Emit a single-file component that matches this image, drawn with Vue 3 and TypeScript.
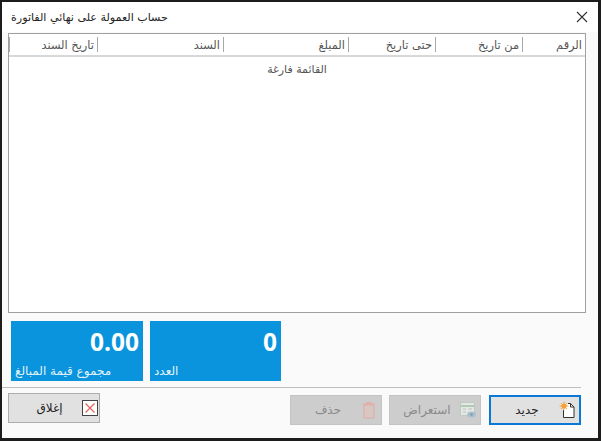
<script setup lang="ts">
interface Column {
  label: string
  width: number
}

const columns: Column[] = [
  { label: 'الرقم', width: 63 },
  { label: 'من تاريخ', width: 87 },
  { label: 'حتى تاريخ', width: 87 },
  { label: 'المبلغ', width: 125 },
  { label: 'السند', width: 126 },
  { label: 'تاريخ السند', width: 88 },
]

const tiles = [
  { value: '0', label: 'العدد' },
  { value: '0.00', label: 'مجموع قيمة المبالغ' },
]
</script>

<template>
  <div class="window" dir="rtl">
    <header class="titlebar">
      <svg class="close" width="12" height="12" viewBox="0 0 12 12">
        <path d="M1 1 L11 11 M11 1 L1 11" stroke="#333" stroke-width="1.1" fill="none" />
      </svg>
      <span class="title">حساب العمولة على نهائي الفاتورة</span>
    </header>

    <section class="grid">
      <div class="grid-head">
        <div v-for="col in columns" :key="col.label" class="grid-col" :style="{ width: col.width + 'px' }">
          {{ col.label }}
        </div>
      </div>
      <div class="grid-empty">القائمة فارغة</div>
    </section>

    <section class="tiles">
      <div v-for="tile in tiles" :key="tile.label" class="tile">
        <div class="tile-value">{{ tile.value }}</div>
        <div class="tile-label">{{ tile.label }}</div>
      </div>
    </section>

    <div class="rule"></div>

    <footer class="actions">
      <button class="btn btn-primary">
        <svg width="18" height="18" viewBox="0 0 18 18">
          <path d="M5.5 9 V16.5 H16 V6 L12.5 2.5 H10" fill="#fff" stroke="#333" stroke-width="1" />
          <path d="M12.5 2.5 V6 H16" fill="none" stroke="#333" stroke-width="1" />
          <circle cx="6" cy="5" r="2.6" fill="#f6a03a" />
          <path d="M6 0.5 V9.5 M1.5 5 H10.5 M3 2 L9 8 M9 2 L3 8" stroke="#f6a03a" stroke-width="0.9" />
        </svg>
        <span>جديد</span>
      </button>
      <button class="btn btn-off btn-view">
        <svg width="18" height="18" viewBox="0 0 18 18">
          <rect x="1.5" y="1.5" width="14" height="13" fill="#e4e8e4" stroke="#bccbbc" />
          <path d="M1.5 5 H15.5" stroke="#b2c9b2" stroke-width="2" />
          <path d="M4 8 H7 M9 8 H13 M4 11 H7" stroke="#c0c0c0" />
          <ellipse cx="12.5" cy="13.5" rx="4.5" ry="3" fill="#a9c0cf" />
          <circle cx="12.5" cy="13.5" r="1.3" fill="#8398a8" />
        </svg>
        <span>استعراض</span>
      </button>
      <button class="btn btn-off">
        <svg width="18" height="18" viewBox="0 0 18 18">
          <path d="M4 4 H14 V17 H4 Z" fill="#d4c9c6" stroke="#e3a9a0" />
          <path d="M3 3 H15 M7 3 V1.5 H11 V3" fill="none" stroke="#e3a9a0" />
          <path d="M7 6.5 V14.5 M11 6.5 V14.5" stroke="#e3c0b8" />
        </svg>
        <span>حذف</span>
      </button>
      <div class="spacer"></div>
      <button class="btn btn-close">
        <svg width="16" height="16" viewBox="0 0 16 16">
          <rect x="0.5" y="0.5" width="15" height="15" fill="#fff" stroke="#444" />
          <path d="M3.5 3.5 L12.5 12.5 M12.5 3.5 L3.5 12.5" stroke="#e8605a" stroke-width="1.2" />
        </svg>
        <span>إغلاق</span>
      </button>
    </footer>
  </div>
</template>

<style>
html,
body {
  margin: 0;
  background: #000;
}
</style>

<style scoped>
.window {
  box-sizing: border-box;
  width: 601px;
  height: 441px;
  background: #fafafa;
  border: solid #1c1c1c;
  border-width: 2px 3px 3px 2px;
  font-family: "DejaVu Sans", sans-serif;
  font-size: 11px;
  color: #333;
  display: flex;
  flex-direction: column;
}

.titlebar {
  height: 30px;
  flex: none;
  background: #fff;
  display: flex;
  align-items: center;
  justify-content: space-between;
  padding: 0 10px 0 9px;
  margin-bottom: 1px;
}

.close {
  margin-top: -1px;
}

.title {
  font-size: 11.1px;
  color: #222;
  white-space: nowrap;
}

.grid {
  box-sizing: border-box;
  width: 578px;
  height: 280px;
  margin-right: 12px;
  flex: none;
  background: #fff;
  border: 1px solid #a0a0a0;
}

.grid-head {
  height: 21px;
  display: flex;
  border-bottom: 2px solid #d8d8d8;
}

.grid-col {
  box-sizing: border-box;
  height: 15px;
  margin-top: 3px;
  padding-right: 3px;
  border-left: 1px solid #a8a8a8;
  line-height: 16px;
  font-size: 11.4px;
  color: #555;
  white-space: nowrap;
}

.grid-empty {
  margin-top: 6px;
  text-align: center;
  font-size: 11px;
  color: #555;
}

.tiles {
  display: flex;
  gap: 7px;
  margin: 8px 317px 0 0;
  flex: none;
}

.tile {
  box-sizing: border-box;
  width: 131px;
  height: 60px;
  background: #0994dd;
  color: #fff;
  padding: 0 4px;
  display: flex;
  flex-direction: column;
  justify-content: space-between;
  overflow: hidden;
}

.tile:last-child {
  width: 132px;
}

.tile-value {
  direction: ltr;
  text-align: right;
  font-family: "Open Sans", sans-serif;
  font-weight: 700;
  font-size: 24.5px;
  line-height: 40px;
  margin-top: 1px;
}

.tile-label {
  direction: rtl;
  align-self: flex-end;
  font-size: 12px;
  line-height: 16px;
  margin-bottom: 2px;
  color: #e4f3fb;
}

.rule {
  flex: none;
  height: 1px;
  width: 579px;
  margin-top: 6px;
  margin-right: 17px;
  background: #bdbdbd;
}

.actions {
  display: flex;
  align-items: flex-start;
  gap: 7px;
  margin: 6px 17px 0 6px;
}

.spacer {
  flex: 1;
}

.btn {
  box-sizing: border-box;
  width: 92px;
  height: 30px;
  margin: 1px 0 0;
  padding: 0 3px 0 0;
  display: flex;
  align-items: center;
  background: #e1e1e1;
  border: 1px solid #adadad;
  font-family: inherit;
  font-size: 12px;
  color: #222;
}

.btn span {
  flex: 1;
  padding-left: 5px;
  text-align: center;
}

.btn-primary {
  border: 2px solid #0a78d7;
}

.btn-view {
  margin-right: 1px;
}

.btn-off {
  background: #cdcdcd;
  border-color: #c4c4c4;
  color: #8a8a8a;
}

.btn-close {
  margin-top: -1px;
  padding-right: 1px;
}

.btn-close span {
  padding-left: 8px;
}
</style>
